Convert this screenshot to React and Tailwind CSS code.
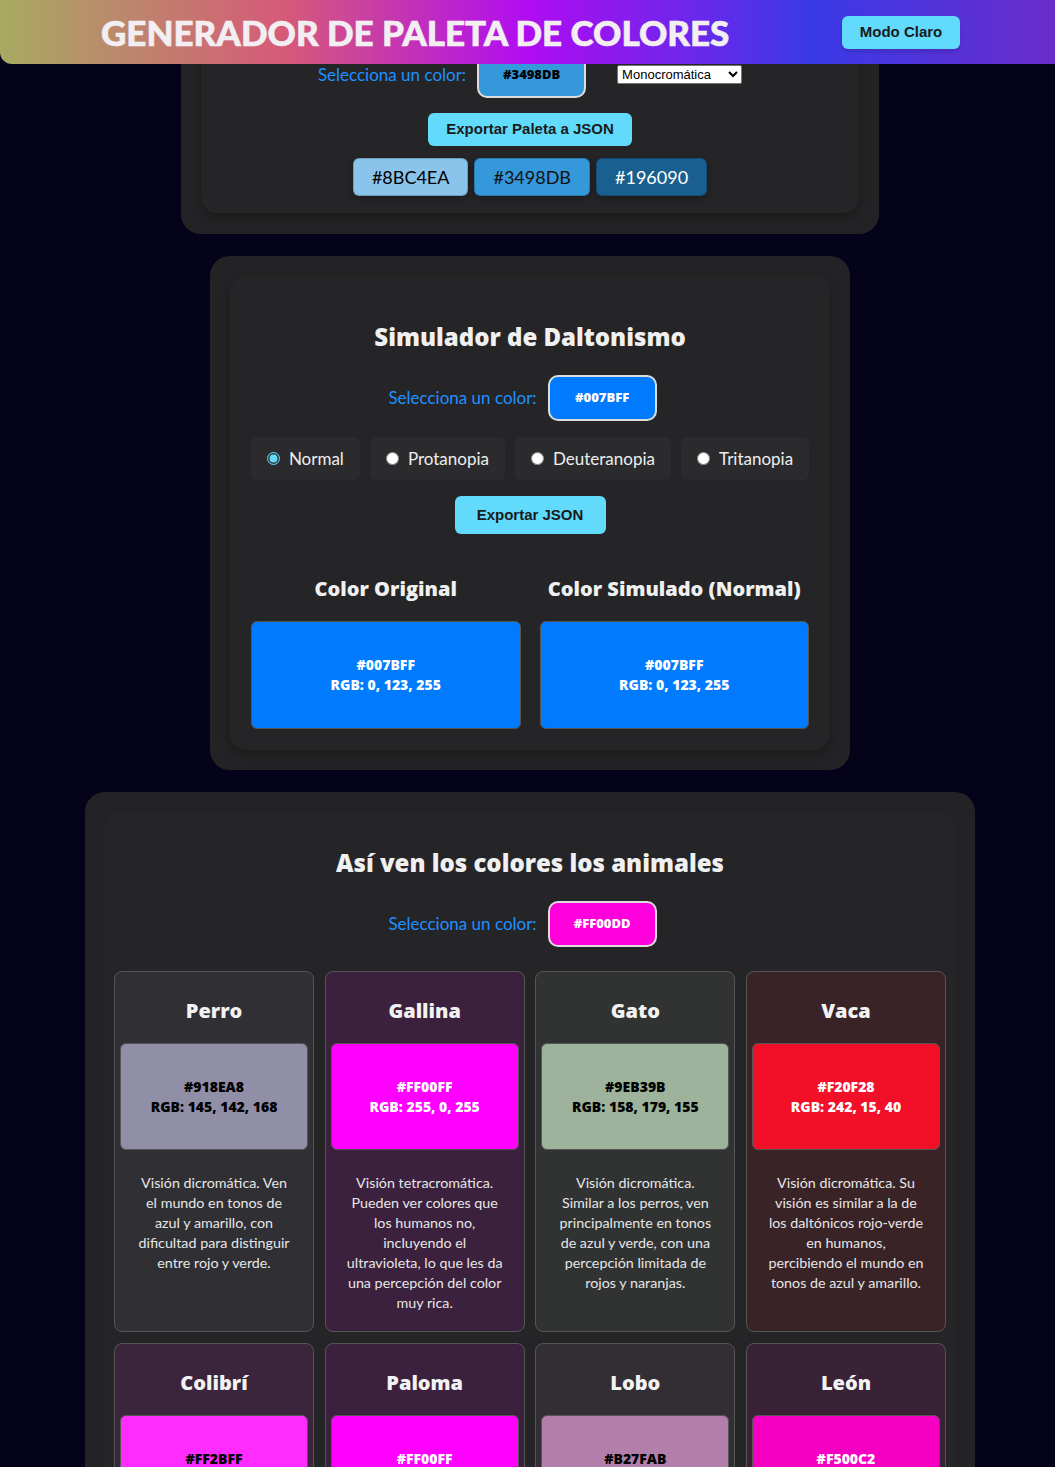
import React, { useState } from 'react';

const palette = [
    { hex: '#8BC4EA', cls: 'bg-[#8BC4EA] text-black' },
    { hex: '#3498DB', cls: 'bg-[#3498DB] text-[#111]' },
    { hex: '#196090', cls: 'bg-[#196090] text-white' },
];

const modes = ['Normal', 'Protanopia', 'Deuteranopia', 'Tritanopia'];

const animals = [
    {
        name: 'Perro', hex: '#918EA8', rgb: '145, 142, 168',
        card: 'bg-[#918EA8]/10', swatch: 'bg-[#918EA8] text-black',
        text: 'Visión dicromática. Ven el mundo en tonos de azul y amarillo, con dificultad para distinguir entre rojo y verde.',
    },
    {
        name: 'Gallina', hex: '#FF00FF', rgb: '255, 0, 255',
        card: 'bg-[#FF00FF]/10', swatch: 'bg-[#FF00FF] text-white',
        text: 'Visión tetracromática. Pueden ver colores que los humanos no, incluyendo el ultravioleta, lo que les da una percepción del color muy rica.',
    },
    {
        name: 'Gato', hex: '#9EB39B', rgb: '158, 179, 155',
        card: 'bg-[#9EB39B]/10', swatch: 'bg-[#9EB39B] text-black',
        text: 'Visión dicromática. Similar a los perros, ven principalmente en tonos de azul y verde, con una percepción limitada de rojos y naranjas.',
    },
    {
        name: 'Vaca', hex: '#F20F28', rgb: '242, 15, 40',
        card: 'bg-[#F20F28]/10', swatch: 'bg-[#F20F28] text-white',
        text: 'Visión dicromática. Su visión es similar a la de los daltónicos rojo-verde en humanos, percibiendo el mundo en tonos de azul y amarillo.',
    },
    {
        name: 'Colibrí', hex: '#FF2BFF', rgb: '255, 43, 255',
        card: 'bg-[#FF2BFF]/10', swatch: 'bg-[#FF2BFF] text-black',
        text: 'Visión tetracromática. Perciben el ultravioleta y distinguen matices que para nosotros son invisibles.',
    },
    {
        name: 'Paloma', hex: '#FF00FF', rgb: '255, 0, 255',
        card: 'bg-[#FF00FF]/10', swatch: 'bg-[#FF00FF] text-white',
        text: 'Visión pentacromática. Distinguen una gama de colores mucho más amplia que la humana.',
    },
    {
        name: 'Lobo', hex: '#B27FAB', rgb: '178, 127, 171',
        card: 'bg-[#B27FAB]/10', swatch: 'bg-[#B27FAB] text-black',
        text: 'Visión dicromática. Ven tonos de azul y amarillo, con gran sensibilidad en la oscuridad.',
    },
    {
        name: 'León', hex: '#F500C2', rgb: '245, 0, 194',
        card: 'bg-[#F500C2]/10', swatch: 'bg-[#F500C2] text-white',
        text: 'Visión dicromática. Perciben pocos colores, pero tienen una excelente visión nocturna.',
    },
];

const body = "font-['Lato','Noto_Sans',sans-serif]";
const heavy = "font-['Open_Sans','Noto_Sans',sans-serif] font-extrabold";
const arial = "font-['Liberation_Sans',Arial,sans-serif]";

function ColorPick({ hex, cls }) {
    return (
        <div className="flex items-center justify-center gap-[11px]">
            <span className={`${body} text-[17px] text-[#1E90FF]`}>Selecciona un color:</span>
            <div className={`mr-[15px] w-[109px] h-[46px] rounded-[10px] border-2 border-[#ddd] flex items-center justify-center ${cls}`}>
                <span className={`${heavy} text-[13px]`}>{hex}</span>
            </div>
        </div>
    );
}

export default function App() {
    const [mode, setMode] = useState('Normal');

    return (
        <div className="min-h-[1467px] bg-[#05031a] relative overflow-hidden">
            {/* fixed header */}
            <header className="absolute top-0 left-0 right-0 z-10 h-16 rounded-bl-xl flex items-center justify-between pl-[101px] pr-[95px] bg-[linear-gradient(90deg,#a8aa62_0%,#d65a78_27%,#b00cf2_50%,#3a3ae8_77%,#6a2ccb_100%)]">
                <h1 className={`font-['Lato','Noto_Sans',sans-serif] font-black text-[35px] text-[#f2eef2] uppercase leading-none [-webkit-text-stroke:0.6px_#f2eef2]`}>Generador de Paleta de Colores</h1>
                <button className={`${arial} font-bold text-[15px] text-[#1a1a1a] bg-[#61dafb] rounded-md w-[118px] h-[33px] shadow-md`}>Modo Claro</button>
            </header>

            <main className="flex flex-col items-center gap-[22px] pl-[5px] pb-10">
                {/* Paleta */}
                <section className="w-[698px] bg-[#232325] rounded-b-[20px] px-5 pb-[21px]">
                    <div className="rounded-b-2xl bg-[#252527] shadow-[0_4px_10px_rgba(0,0,0,0.25)] pt-[52px] pb-[17px] flex flex-col items-center">
                        <div className="flex items-center">
                            <span className={`${body} text-[17px] text-[#1E90FF]`}>Selecciona un color:</span>
                            <div className="ml-[11px] w-[109px] h-[46px] rounded-[10px] border-2 border-[#ddd] bg-[#3498DB] flex items-center justify-center">
                                <span className={`${heavy} text-[13px] text-black`}>#3498DB</span>
                            </div>
                            <select className={`${arial} ml-[31px] self-start mt-[13px] h-[19px] w-[125px] bg-white text-black text-[13px] border border-[#767676] rounded-[2px]`} defaultValue="mono">
                                <option value="mono">Monocromática</option>
                            </select>
                        </div>
                        <button className={`${arial} mt-[15px] h-[33px] px-[18px] rounded-md bg-[#61dafb] text-[#1a1a1a] font-bold text-[15px]`}>Exportar Paleta a JSON</button>
                        <div className="mt-3 flex gap-[6px]">
                            {palette.map((c) => (
                                <div key={c.hex} className={`${body} ${c.cls} px-[18px] h-[38px] rounded-md border border-black/20 shadow-[0_2px_6px_rgba(0,0,0,0.3)] flex items-center justify-center text-[18px]`}>
                                    {c.hex}
                                </div>
                            ))}
                        </div>
                    </div>
                </section>

                {/* Daltonismo */}
                <section className="w-[640px] bg-[#232325] rounded-[20px] p-5">
                    <div className="rounded-2xl bg-[#252527] shadow-[0_4px_10px_rgba(0,0,0,0.25)] pt-[45px] pb-[21px] px-[21px] flex flex-col items-center">
                        <h2 className={`${heavy} text-[24px] leading-8 text-[#f0f0f0]`}>Simulador de Daltonismo</h2>
                        <div className="mt-[22px]">
                            <ColorPick hex="#007BFF" cls="bg-[#007BFF] text-white" />
                        </div>
                        <div className="mt-4 flex gap-[10px]">
                            {modes.map((m) => (
                                <label key={m} className={`${body} h-[43px] px-4 rounded-md bg-[#2b2b2d] flex items-center gap-[9px] text-[17px] text-[#eee] cursor-pointer`}>
                                    <input type="radio" name="mode" checked={mode === m} onChange={() => setMode(m)} className="w-[13px] h-[13px] accent-[#61dafb]" />
                                    {m}
                                </label>
                            ))}
                        </div>
                        <button className={`${arial} mt-4 h-[38px] w-[151px] rounded-md bg-[#61dafb] text-[#1a1a1a] font-bold text-[15px]`}>Exportar JSON</button>
                        <div className="mt-[41px] w-full grid grid-cols-2 gap-[19px]">
                            {['Color Original', `Color Simulado (${mode})`].map((t) => (
                                <div key={t} className="flex flex-col items-center">
                                    <h3 className={`${heavy} text-[20px] leading-7 text-[#f0f0f0]`}>{t}</h3>
                                    <div className={`${heavy} mt-[18px] w-full h-[108px] rounded-md border border-[#555] bg-[#007BFF] text-white text-[14px] leading-5 flex flex-col items-center justify-center`}>
                                        <span>#007BFF</span>
                                        <span>RGB: 0, 123, 255</span>
                                    </div>
                                </div>
                            ))}
                        </div>
                    </div>
                </section>

                {/* Animales */}
                <section className="w-[890px] bg-[#232325] rounded-t-[20px] px-5 pt-5">
                    <div className="rounded-t-2xl bg-[#252527] pt-[35px] px-[9px] flex flex-col items-center">
                        <h2 className={`${heavy} text-[24px] leading-8 text-[#f0f0f0]`}>Así ven los colores los animales</h2>
                        <div className="mt-[22px]">
                            <ColorPick hex="#FF00DD" cls="bg-[#FF00DD] text-white" />
                        </div>
                        <div className="mt-6 grid grid-cols-4 gap-x-[10.6px] gap-y-[11px] w-[832px]">
                            {animals.map((a) => (
                                <div key={a.name} className={`${a.card} rounded-lg border border-[#555] p-[5px] pb-[18px] flex flex-col items-center`}>
                                    <h3 className={`${heavy} mt-5 text-[20px] leading-7 text-[#f2f2f2]`}>{a.name}</h3>
                                    <div className={`${heavy} ${a.swatch} mt-[18px] w-full h-[107px] rounded-md border border-[#555] text-[14px] leading-5 flex flex-col items-center justify-center`}>
                                        <span>{a.hex}</span>
                                        <span>RGB: {a.rgb}</span>
                                    </div>
                                    <p className={`${body} mt-[23px] px-4 text-center text-[14.3px] leading-5 text-[#e6e6e6]`}>{a.text}</p>
                                </div>
                            ))}
                        </div>
                    </div>
                </section>
            </main>
        </div>
    );
}
